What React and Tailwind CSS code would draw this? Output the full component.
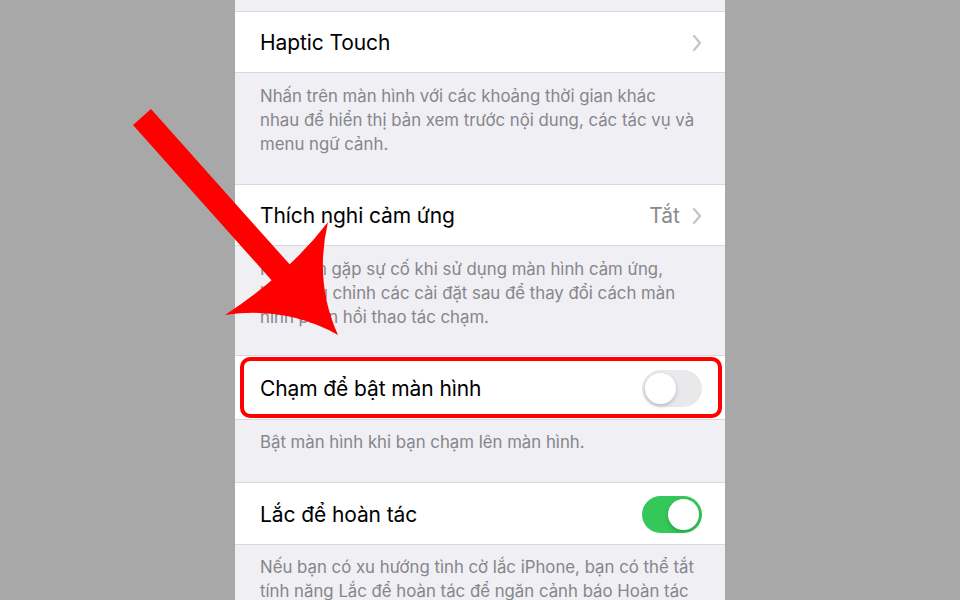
import React from "react";

const font = { fontFamily: "Inter, 'Noto Sans', sans-serif" };

function Chevron() {
  return (
    <svg width="10" height="18" viewBox="0 0 10 18" className="ml-3">
      <path d="M2 2 L8 9 L2 16" fill="none" stroke="#c4c4c7" strokeWidth="2.2" strokeLinecap="round" strokeLinejoin="round" />
    </svg>
  );
}

function Toggle({ on }) {
  return (
    <div
      className={
        on
          ? "w-[60px] h-[37px] rounded-full bg-[#34c759] p-[3px] flex justify-end"
          : "w-[60px] h-[37px] rounded-full bg-[#e9e9eb] p-[3px] flex justify-start"
      }
    >
      <div className="w-[31px] h-[31px] rounded-full bg-white shadow-[0_2px_4px_rgba(0,0,0,0.2)]" />
    </div>
  );
}

function Row({ title, children, h = "h-[62px]", extra = null }) {
  return (
    <div className={`relative ${h} shrink-0 bg-white border-y border-[#d9d9dd] flex items-center pl-[25px] pr-[23px] pt-[2px]`}>
      <span className="flex-1 text-[21px] text-black tracking-[-0.1px]">{title}</span>
      {children}
      {extra}
    </div>
  );
}

function Footer({ lines, className }) {
  return (
    <div className={`pl-[25px] pr-[10px] text-[16.8px] leading-[24px] text-[#86868b] ${className}`}>
      {lines.map((l, i) => (
        <div key={i} className="whitespace-nowrap">{l}</div>
      ))}
    </div>
  );
}

export default function App() {
  return (
    <div className="relative w-[960px] h-[600px] bg-[#a8a8a8] flex justify-center overflow-hidden" style={font}>
      <div className="w-[490px] h-[600px] bg-[#efeff4] flex flex-col">
        <div className="h-[11px] shrink-0" />
        <Row title="Haptic Touch">
          <Chevron />
        </Row>
        <Footer
          className="pt-[11px] h-[111px] shrink-0"
          lines={[
            "Nhấn trên màn hình với các khoảng thời gian khác",
            "nhau để hiển thị bản xem trước nội dung, các tác vụ và",
            "menu ngữ cảnh.",
          ]}
        />
        <Row title="Thích nghi cảm ứng">
          <span className="text-[21px] text-[#8a8a8e]">Tắt</span>
          <Chevron />
        </Row>
        <Footer
          className="pt-[11px] h-[109px] shrink-0"
          lines={[
            "Nếu bạn gặp sự cố khi sử dụng màn hình cảm ứng,",
            "hãy điều chỉnh các cài đặt sau để thay đổi cách màn",
            "hình phản hồi thao tác chạm.",
          ]}
        />
        <Row
          title="Chạm để bật màn hình"
          h="h-[65px]"
          extra={
            <div className="absolute left-[5px] right-[3px] top-[1px] bottom-[1px] rounded-[10px] border-[4px] border-[#ff0000]" />
          }
        >
          <Toggle on={false} />
        </Row>
        <Footer className="pt-[10px] h-[62px] shrink-0" lines={["Bật màn hình khi bạn chạm lên màn hình."]} />
        <Row title="Lắc để hoàn tác" h="h-[63px]">
          <Toggle on={true} />
        </Row>
        <Footer
          className="pt-[10px] shrink-0"
          lines={[
            "Nếu bạn có xu hướng tình cờ lắc iPhone, bạn có thể tắt",
            "tính năng Lắc để hoàn tác để ngăn cảnh báo Hoàn tác",
          ]}
        />
      </div>

      {/* red callout arrow */}
      <svg className="absolute left-0 top-0 pointer-events-none" width="960" height="600" viewBox="0 0 960 600">
        <polygon points="133,125 151,109 292,267 274,283" fill="#ff0000" />
        <path d="M328 222 Q314 282 338 335 Q286 306 225 315 Q290 272 328 222 Z" fill="#ff0000" />
      </svg>
    </div>
  );
}
